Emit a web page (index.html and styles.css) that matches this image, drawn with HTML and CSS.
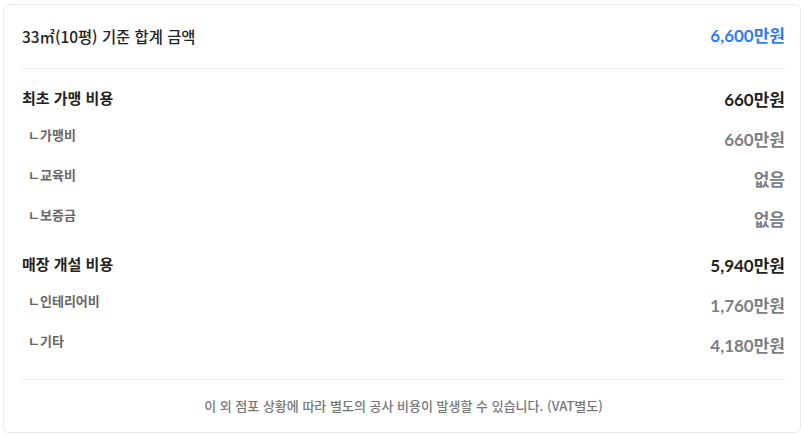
FILE: index.html
```html
<!DOCTYPE html>
<html lang="ko">
<head>
    <meta charset="UTF-8">
    <meta name="viewport" content="width=device-width, initial-scale=1.0">
    <title>창업 비용</title>
    <link rel="stylesheet" href="styles.css">
</head>
<body>
    <div class="card">
        <div class="total">
            <span class="total-label">33㎡(10평) 기준 합계 금액</span>
            <span class="total-value">6,600만원</span>
        </div>

        <div class="list">
            <div class="section">
                <div class="row">
                    <span class="label">최초 가맹 비용</span>
                    <span class="value">660만원</span>
                </div>
                <div class="row sub">
                    <span class="label">ㄴ가맹비</span>
                    <span class="value">660만원</span>
                </div>
                <div class="row sub">
                    <span class="label">ㄴ교육비</span>
                    <span class="value">없음</span>
                </div>
                <div class="row sub">
                    <span class="label">ㄴ보증금</span>
                    <span class="value">없음</span>
                </div>
            </div>
            <div class="section">
                <div class="row">
                    <span class="label">매장 개설 비용</span>
                    <span class="value">5,940만원</span>
                </div>
                <div class="row sub">
                    <span class="label">ㄴ인테리어비</span>
                    <span class="value">1,760만원</span>
                </div>
                <div class="row sub">
                    <span class="label">ㄴ기타</span>
                    <span class="value">4,180만원</span>
                </div>
            </div>
        </div>

        <p class="note">이 외 점포 상황에 따라 별도의 공사 비용이 발생할 수 있습니다. (VAT별도)</p>
    </div>
</body>
</html>
```

FILE: styles.css
```css
body{
    margin: 4px 3px 2px;
    font-family: "Noto Sans CJK KR", sans-serif;
    color: #222;
    background: #fff;
}

.card{
    border: 1px solid #ebebeb;
    border-radius: 6px;
    padding: 0 15px 0 18px;
}

.total{
    display: flex;
    justify-content: space-between;
    align-items: center;
    padding: 21px 0 22px;
    line-height: 20px;
    border-bottom: 1px solid #eeeeee;
}

.total-label{
    font-size: 15.4px;
    font-weight: 500;
}

.total-value{
    font-family: Lato, "Noto Sans CJK KR", sans-serif;
    font-size: 17px;
    font-weight: 700;
    color: #2f7cf6;
}

.list{
    padding: 19px 0 5px;
    border-bottom: 1px solid #eeeeee;
}

.section + .section{
    margin-top: 6px;
}

.row{
    display: flex;
    justify-content: space-between;
    align-items: flex-start;
    height: 40px;
}

.row .label{
    font-size: 15px;
    font-weight: 700;
    line-height: 20px;
}

.row .value{
    font-family: Lato, "Noto Sans CJK KR", sans-serif;
    font-size: 17px;
    font-weight: 700;
    line-height: 24px;
}

.row.sub .label{
    font-size: 13px;
    font-weight: 700;
    line-height: 14px;
    color: #666;
    padding-left: 6px;
}

.row.sub .value{
    color: #7b7e84;
}

.note{
    margin: 0;
    padding: 16px 0;
    line-height: 20px;
    text-align: center;
    font-size: 13px;
    font-weight: 500;
    color: #777;
}
```
